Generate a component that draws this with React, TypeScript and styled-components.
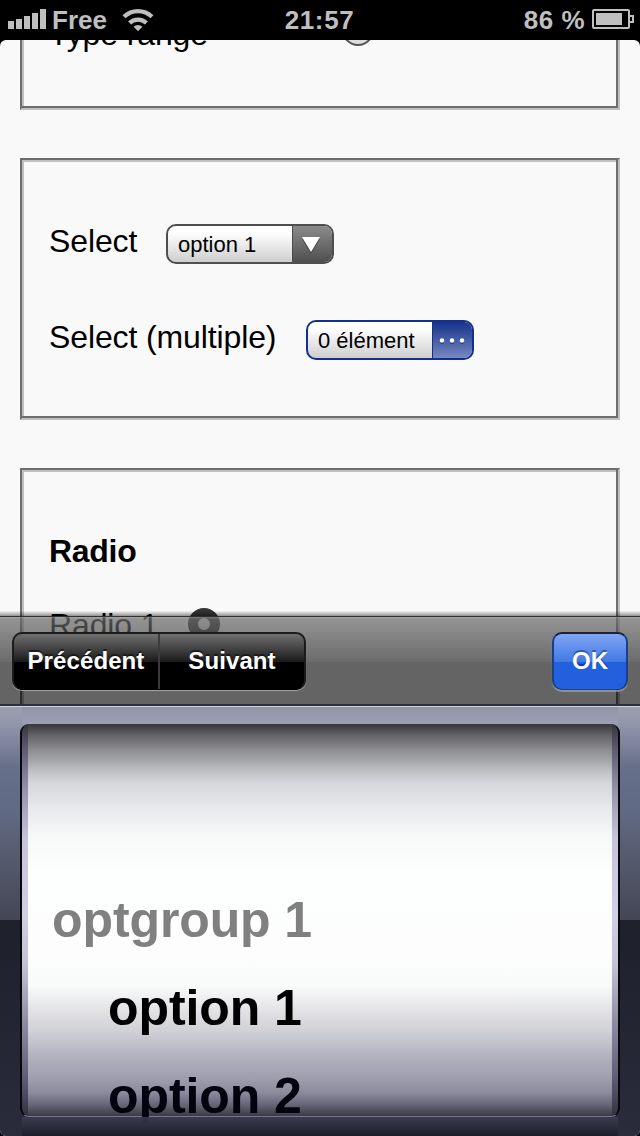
import React from 'react';
import styled, { createGlobalStyle } from 'styled-components';

const Global = createGlobalStyle`
  * { box-sizing: border-box; }
  html, body { margin: 0; padding: 0; background: #000; }
  body { font-family: "Liberation Sans", Arial, sans-serif; color: #000; }
`;

const Phone = styled.div`
  position: relative;
  width: 640px;
  height: 1136px;
  overflow: hidden;
  background: #000;
`;

const StatusBar = styled.header`
  height: 40px;
  display: grid;
  grid-template-columns: 1fr auto 1fr;
  align-items: center;
  padding: 0 6px 0 8px;
  color: #bfbfbf;
  font-size: 26px;
  font-weight: bold;
  line-height: 40px;
`;

const StatusGroup = styled.div<{ $end?: boolean }>`
  display: flex;
  align-items: center;
  justify-content: ${(p) => (p.$end ? 'flex-end' : 'flex-start')};
  height: 40px;
`;

const Clock = styled.span`
  margin-left: -3px;
  letter-spacing: 0.6px;
`;

const Charge = styled.span`
  letter-spacing: 0.5px;
`;

const Signal = styled.div`
  display: flex;
  align-items: flex-end;
  gap: 2px;
  height: 20px;
  margin: -2px 6px 0 0;
`;

const SignalBar = styled.i<{ $height: number }>`
  width: 6px;
  height: ${(p) => p.$height}px;
  background: #bfbfbf;
`;

const WifiIcon = styled.svg`
  margin: -1px 0 0 15px;
`;

const BatteryIcon = styled.svg`
  margin: -2px 0 0 7px;
`;

const Page = styled.main`
  height: 1096px;
  padding: 0 20px;
  overflow: hidden;
  background: #f9f9f9;
  border-radius: 6px 6px 0 0;
  font-size: 32px;
  line-height: 36px;
`;

const Fieldset = styled.section<{ $height: number; $clipped?: boolean }>`
  display: flow-root;
  height: ${(p) => p.$height}px;
  margin-bottom: 48px;
  padding: 0 27px;
  border: 2px solid;
  border-color: #6d6d6d #c0c0c0 #c0c0c0 #6d6d6d;
  border-top-width: ${(p) => (p.$clipped ? 0 : 2)}px;
  box-shadow: ${(p) =>
    p.$clipped
      ? 'inset -2px -2px #6d6d6d, inset 2px 0 #c0c0c0'
      : 'inset -2px -2px #6d6d6d, inset 2px 2px #c0c0c0'};
`;

const FieldRow = styled.label<{ $top: number; $gap: number }>`
  display: flex;
  align-items: center;
  gap: ${(p) => p.$gap}px;
  height: 40px;
  margin-top: ${(p) => p.$top}px;
`;

const FieldText = styled.span<{ $width: number; $shift?: number }>`
  width: ${(p) => p.$width}px;
  margin-top: ${(p) => p.$shift ?? -6}px;
  letter-spacing: -0.12px;
  white-space: nowrap;
`;

const Heading = styled.h2`
  margin: 0;
  padding-top: 63px;
  font-size: 32px;
  line-height: 36px;
  letter-spacing: -0.3px;
`;

const Thumb = styled.span`
  width: 32px;
  height: 32px;
  border: 2px solid #555;
  border-radius: 50%;
  background: #ddd;
`;

const RadioDot = styled.span`
  width: 32px;
  height: 32px;
  border: 10px solid #343434;
  border-radius: 50%;
  background: #e4e4e4;
`;

const SelectBox = styled.span<{ $blue?: boolean }>`
  display: flex;
  width: 168px;
  height: 40px;
  overflow: hidden;
  border: 2px solid ${(p) => (p.$blue ? '#14308a' : '#4f4f4f')};
  border-radius: 10px;
  background: linear-gradient(#fff, #fbfbfb 25%, #cecece);
`;

const SelectValue = styled.span`
  flex: 1;
  padding-left: 10px;
  font-size: 22px;
  line-height: 37px;
  white-space: nowrap;
`;

const SelectCap = styled.span<{ $blue?: boolean }>`
  display: flex;
  align-items: center;
  justify-content: center;
  width: 40px;
  margin-top: -1px;
  padding-right: ${(p) => (p.$blue ? 2 : 4)}px;
  border-left: 1px solid ${(p) => (p.$blue ? '#14308a' : '#4a4a4a')};
  background: ${(p) =>
    p.$blue ? 'linear-gradient(#14308a, #7588c0)' : 'linear-gradient(#8d8d8d, #4f4f4f)'};
`;

const Keyboard = styled.div`
  position: absolute;
  left: 0;
  top: 611px;
  width: 640px;
  height: 525px;
`;

const ToolbarShade = styled.div`
  height: 5px;
  background: linear-gradient(rgba(0, 0, 0, 0.02), rgba(0, 0, 0, 0.42));
`;

const Toolbar = styled.nav`
  display: flex;
  justify-content: space-between;
  align-items: flex-start;
  height: 90px;
  padding: 15px 12px 0;
  border-top: 1px solid #303030;
  border-bottom: 2px solid #2b303d;
  background: linear-gradient(
      rgba(255, 255, 255, 0.42) 0,
      rgba(255, 255, 255, 0.3) 2px,
      rgba(255, 255, 255, 0.27) 8px,
      rgba(255, 255, 255, 0.05) 45px,
      rgba(255, 255, 255, 0) 45px
    ),
    rgba(0, 0, 0, 0.6);
`;

const Segments = styled.div`
  display: flex;
  width: 294px;
  height: 58px;
  overflow: hidden;
  border: 2px solid #1b1b1b;
  border-bottom: 1px solid #000;
  border-radius: 10px;
  background: linear-gradient(#707070, #1a1a1a 28px, #000 28px);
  box-shadow: 0 1px 1px rgba(190, 190, 190, 0.75);
`;

const Segment = styled.button<{ $width: number }>`
  width: ${(p) => p.$width}px;
  padding: 0;
  border: 0;
  background: none;
  color: #fff;
  font: bold 24px/51px "Liberation Sans", Arial, sans-serif;
  letter-spacing: 0.1px;
  text-shadow: 0 -2px 0 rgba(0, 0, 0, 0.5);
  padding-bottom: 2px;
  & + & { border-left: 2px solid #3b3b3b; }
`;

const DoneButton = styled.button`
  width: 76px;
  height: 58px;
  padding: 0 0 2px;
  border: 2px solid #18408f;
  border-top-color: #1b2140;
  border-bottom-width: 1px;
  border-radius: 10px;
  background: linear-gradient(#80a6f4, #4179e3 28px, #2260dd 28px);
  box-shadow: 0 2px 1px rgba(170, 170, 170, 0.65);
  color: #fff;
  font: bold 24px/51px "Liberation Sans", Arial, sans-serif;
  text-shadow: 0 -2px 0 rgba(0, 0, 60, 0.4);
`;

const Picker = styled.div`
  position: relative;
  height: 430px;
  padding: 17px 20px 0;
  border-top: 1px solid #d0d3dc;
  border-radius: 0 0 6px 6px;
  background: linear-gradient(
    #9a9fb0 0,
    #9298ab 16px,
    #676f8a 60px,
    #606a84 105px,
    #575d70 145px,
    #444655 213px,
    #1e202c 213px,
    #222431 300px,
    #2a2c3c 429px
  );
  box-shadow: 0 6px 0 #000;
`;

const PickerTop = styled.div`
  position: absolute;
  left: 22px;
  right: 22px;
  top: 0;
  height: 17px;
  background: linear-gradient(#9095a7, #9ca0b5);
`;

const PickerFoot = styled.div`
  position: absolute;
  left: 22px;
  right: 22px;
  bottom: 0;
  height: 19px;
  background: linear-gradient(rgba(61, 62, 82, 0.85), rgba(27, 28, 42, 0.9));
`;

const Wheel = styled.div`
  position: relative;
  height: 393px;
  border: solid #08080c;
  border-width: 0 2px;
  border-bottom: 1px solid #77778a;
  border-radius: 9px;
  padding: 0 6px;
  background: linear-gradient(
    #343440 0,
    #5c5b70 25px,
    #9392a8 65px,
    #c5c4da 115px,
    #cfcfe5 190px,
    #c3c2d6 240px,
    #8b8aa2 300px,
    #62617b 350px,
    #30303f 393px
  );
`;

const WheelFace = styled.div`
  height: 392px;
  padding: 152px 0 0 24px;
  background: linear-gradient(
    #38383c 0,
    #66666a 12px,
    #909092 27px,
    #c0c1c5 48px,
    #d6d7dc 59px,
    #e8e9eb 84px,
    #f7f8f8 112px,
    #fdfefe 150px,
    #fdfdfd 230px,
    #f9fafa 262px,
    #e3e3e6 286px,
    #cfcfd5 308px,
    #b5b5c1 330px,
    #9c9cac 356px,
    #8a8a9c 369px,
    #68687a 380px,
    #3b3a44 392px
  );
`;

const WheelItem = styled.div<{ $group?: boolean; $dim?: boolean }>`
  height: 88px;
  padding-left: ${(p) => (p.$group ? 0 : 56)}px;
  color: ${(p) => (p.$group ? '#808080' : p.$dim ? '#03030f' : '#000')};
  font-size: 50px;
  font-weight: bold;
  letter-spacing: -0.1px;
  line-height: 88px;
  white-space: nowrap;
`;

export default function App() {
  return (
    <Phone>
      <Global />
      <StatusBar>
        <StatusGroup>
          <Signal>
            {[8, 10, 13, 16, 20].map((height) => (
              <SignalBar key={height} $height={height} />
            ))}
          </Signal>
          <span>Free</span>
          <WifiIcon width="32" height="24" viewBox="0 0 32 24" fill="none" stroke="#bfbfbf" strokeWidth="4.2">
            <path d="M2 8.8a20 20 0 0 1 28 0" />
            <path d="M7.6 15a12 12 0 0 1 16.8 0" />
            <path d="M16 23.2l-4.4-4.4a6.3 6.3 0 0 1 8.8 0z" fill="#bfbfbf" stroke="none" />
          </WifiIcon>
        </StatusGroup>
        <Clock>21:57</Clock>
        <StatusGroup $end>
          <Charge>86 %</Charge>
          <BatteryIcon width="42" height="20" viewBox="0 0 42 20">
            <rect x="1" y="1" width="36" height="18" rx="1" fill="none" stroke="#bfbfbf" strokeWidth="2" />
            <rect x="4" y="4" width="26" height="12" fill="#bfbfbf" />
            <path d="M38 7h3v6h-3" fill="none" stroke="#bfbfbf" strokeWidth="2" />
          </BatteryIcon>
        </StatusGroup>
      </StatusBar>
      <Page>
        <Fieldset $height={70} $clipped>
          <FieldRow $top={-30} $gap={133}>
            <FieldText $width={160} $shift={8}>Type range</FieldText>
            <Thumb />
          </FieldRow>
        </Fieldset>
        <Fieldset $height={262}>
          <FieldRow $top={64} $gap={29}>
            <FieldText $width={88}>Select</FieldText>
            <SelectBox>
              <SelectValue>option 1</SelectValue>
              <SelectCap>
                <svg width="20" height="20" viewBox="0 0 20 20">
                  <path d="M1 5h18L10 20z" fill="#333" opacity=".6" />
                  <path d="M1 3h18L10 18z" fill="#fff" />
                </svg>
              </SelectCap>
            </SelectBox>
          </FieldRow>
          <FieldRow $top={56} $gap={29}>
            <FieldText $width={228}>Select (multiple)</FieldText>
            <SelectBox $blue>
              <SelectValue>0 élément</SelectValue>
              <SelectCap $blue>
                <svg width="26" height="10" viewBox="0 0 26 10">
                  {[3, 13, 23].map((x) => (
                    <g key={x}>
                      <circle cx={x} cy="7" r="2" fill="#30364d" />
                      <circle cx={x} cy="5.5" r="2.2" fill="#fff" />
                    </g>
                  ))}
                </svg>
              </SelectCap>
            </SelectBox>
          </FieldRow>
        </Fieldset>
        <Fieldset $height={700}>
          <Heading>Radio</Heading>
          <FieldRow $top={35} $gap={31}>
            <FieldText $width={108} $shift={2}>Radio 1</FieldText>
            <RadioDot />
          </FieldRow>
        </Fieldset>
      </Page>
      <Keyboard>
        <ToolbarShade />
        <Toolbar>
          <Segments>
            <Segment $width={144}>Précédent</Segment>
            <Segment $width={146}>Suivant</Segment>
          </Segments>
          <DoneButton>OK</DoneButton>
        </Toolbar>
        <Picker>
          <PickerTop />
          <Wheel>
            <WheelFace>
              <WheelItem $group>optgroup 1</WheelItem>
              <WheelItem>option 1</WheelItem>
              <WheelItem $dim>option 2</WheelItem>
            </WheelFace>
          </Wheel>
          <PickerFoot />
        </Picker>
      </Keyboard>
    </Phone>
  );
}
